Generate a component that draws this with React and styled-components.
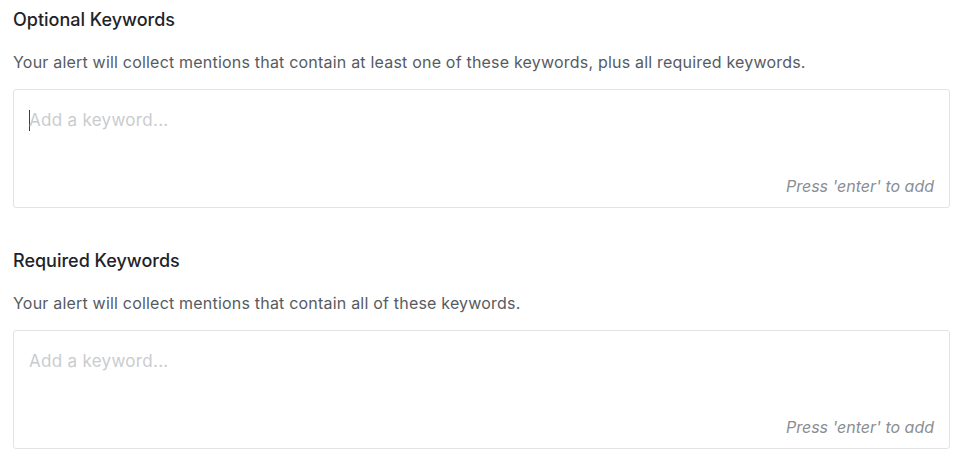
import React from "react";
import styled, { createGlobalStyle } from "styled-components";

const GlobalStyle = createGlobalStyle`
  body {
    margin: 0;
    background: #ffffff;
    font-family: Inter, "Noto Sans", "Liberation Sans", sans-serif;
  }
`;

const sections = [
  {
    title: "Optional Keywords",
    text: "Your alert will collect mentions that contain at least one of these keywords, plus all required keywords.",
    focused: true,
  },
  {
    title: "Required Keywords",
    text: "Your alert will collect mentions that contain all of these keywords.",
    focused: false,
  },
];

function KeywordSection({ title, text, focused }) {
  return (
    <Section>
      <Title>{title}</Title>
      <Description>{text}</Description>
      <KeywordBox>
        <InputLine>
          {focused && <Caret />}
          <Placeholder>Add a keyword...</Placeholder>
        </InputLine>
        <Hint>Press 'enter' to add</Hint>
      </KeywordBox>
    </Section>
  );
}

export default function App() {
  return (
    <Page>
      <GlobalStyle />
      {sections.map((s) => (
        <KeywordSection key={s.title} {...s} />
      ))}
    </Page>
  );
}

const Page = styled.div`
  width: 974px;
  height: 464px;
  box-sizing: border-box;
  padding: 8px 24px 0 13px;
  display: flex;
  flex-direction: column;
  gap: 41px;
  overflow: hidden;
`;

const Section = styled.div`
  display: flex;
  flex-direction: column;
`;

const Title = styled.div`
  font-size: 18px;
  line-height: 24px;
  font-weight: 500;
  color: #1f2329;
`;

const Description = styled.div`
  margin-top: 18px;
  font-size: 16px;
  line-height: 24px;
  letter-spacing: 0.2px;
  color: #565b62;
`;

const KeywordBox = styled.div`
  margin-top: 15px;
  height: 119px;
  box-sizing: border-box;
  border: 1px solid #e2e3e5;
  border-radius: 3px;
  display: flex;
  flex-direction: column;
  justify-content: space-between;
  padding: 18px 15px 9px 15px;
`;

const InputLine = styled.div`
  display: flex;
  align-items: center;
  height: 24px;
`;

const Caret = styled.span`
  width: 1px;
  height: 21px;
  background: #3b3f45;
  margin-right: -1px;
`;

const Placeholder = styled.span`
  font-size: 17px;
  line-height: 24px;
  letter-spacing: 0.3px;
  color: #c9cccf;
`;

const Hint = styled.div`
  align-self: flex-end;
  font-size: 16px;
  line-height: 24px;
  font-style: italic;
  color: #8a8e94;
`;
